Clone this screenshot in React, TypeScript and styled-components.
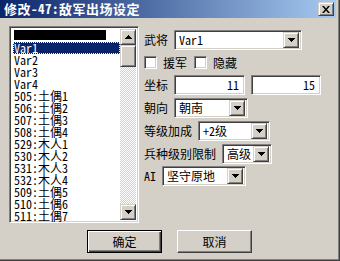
import styled, { createGlobalStyle } from 'styled-components';

const face = '#d4d0c8';
const navy = '#0a246a';
const font = `"Noto Sans Mono CJK SC", "Noto Sans CJK SC", "Liberation Mono", monospace`;

const Global = createGlobalStyle`
  html, body { margin: 0; padding: 0; background: ${face}; }
  body { font: 12px/12px ${font}; color: #000; }
`;

const items = [
  '', 'Var1', 'Var2', 'Var3', 'Var4',
  '505:土偶1', '506:土偶2', '507:土偶3', '508:土偶4',
  '529:木人1', '530:木人2', '531:木人3', '532:木人4',
  '509:土偶5', '510:土偶6', '511:土偶7',
];

const Window = styled.div`
  width: 340px;
  height: 261px;
  box-sizing: border-box;
  padding-right: 4px;
  background: ${face};
  box-shadow: inset -1px -1px #404040, inset -2px -2px #808080;
  display: flex;
  flex-direction: column;
`;

const TitleBar = styled.div`
  height: 18px;
  display: flex;
  align-items: center;
  justify-content: space-between;
  background: linear-gradient(90deg, ${navy}, #a6caf0);
`;

const Title = styled.span`
  color: #fff;
  font-size: 13px;
  font-weight: bold;
  padding-left: 4px;
  letter-spacing: 0.5px;
`;

const Raised = styled.div`
  box-sizing: border-box;
  background: ${face};
  border: 1px solid;
  border-color: ${face} #404040 #404040 ${face};
  box-shadow: inset 1px 1px #fff, inset -1px -1px #808080;
  display: flex;
  align-items: center;
  justify-content: center;
`;

const CloseBtn = styled(Raised)`
  width: 16px;
  height: 14px;
  margin-right: 2px;
`;

const Sunken = styled.div`
  box-sizing: border-box;
  background: #fff;
  border: 1px solid;
  border-color: #808080 #fff #fff #808080;
  box-shadow: inset 1px 1px #404040, inset -1px -1px ${face};
`;

const Body = styled.div`
  display: flex;
  padding: 8px 0 0 9px;
`;

const ListBox = styled(Sunken)`
  width: 130px;
  height: 197px;
  padding: 2px;
  display: flex;
`;

const Items = styled.div`
  flex: 1;
  padding-top: 1px;
`;

const Item = styled.div<{ $selected?: boolean }>`
  height: 12px;
  line-height: 12px;
  padding-left: 1px;
  margin-left: 1px;
  white-space: nowrap;
  background: ${(p) => (p.$selected ? navy : 'transparent')};
  color: ${(p) => (p.$selected ? '#fff' : '#000')};
  outline: ${(p) => (p.$selected ? '1px dotted #fff8c0' : 'none')};
  outline-offset: -1px;
`;

const BlackBar = styled.div`
  width: 92px;
  height: 10px;
  background: #000;
`;

const ScrollBar = styled.div`
  width: 16px;
  display: flex;
  flex-direction: column;
`;

const ArrowBtn = styled(Raised)`
  width: 16px;
  height: 16px;
`;

const Thumb = styled(Raised)`
  width: 16px;
  height: 22px;
`;

const Track = styled.div`
  flex: 1;
  background: repeating-conic-gradient(#fff 0 25%, ${face} 0 50%) 0 0 / 2px 2px;
`;

const Form = styled.div`
  display: flex;
  flex-direction: column;
  padding: 4px 0 0 5px;
`;

const Row = styled.div<{ $top: number; $h?: number }>`
  display: flex;
  align-items: center;
  gap: 6px;
  margin-top: ${(p) => p.$top}px;
  height: ${(p) => p.$h ?? 20}px;
`;

const Label = styled.span`
  white-space: nowrap;
`;

const Combo = styled(Sunken)<{ $w: number }>`
  width: ${(p) => p.$w}px;
  height: 20px;
  padding: 2px;
  display: flex;
  align-items: center;
`;

const ComboText = styled.span`
  flex: 1;
  padding-left: 2px;
  white-space: nowrap;
`;

const DropBtn = styled(Raised)`
  width: 16px;
  height: 16px;
`;

const Edit = styled(Sunken)<{ $w: number }>`
  width: ${(p) => p.$w}px;
  height: 20px;
  padding: 0 5px;
  display: flex;
  align-items: center;
  justify-content: flex-end;
`;

const CheckBox = styled(Sunken)`
  width: 13px;
  height: 13px;
`;

const CheckLabel = styled.span<{ $gap: number }>`
  margin-right: ${(p) => p.$gap}px;
`;

const Buttons = styled.div`
  display: flex;
  gap: 15px;
  padding: 7px 0 0 87px;
`;

const Button = styled.div<{ $default?: boolean }>`
  box-sizing: border-box;
  width: 75px;
  height: 23px;
  display: flex;
  align-items: center;
  justify-content: center;
  background: ${face};
  border: 1px solid;
  border-color: ${(p) => (p.$default ? '#000' : '#fff #404040 #404040 #fff')};
  box-shadow: ${(p) =>
    p.$default
      ? 'inset 1px 1px #fff, inset -1px -1px #404040, inset -2px -2px #808080'
      : 'inset -1px -1px #808080'};
`;

const Arrow = ({ up }: { up?: boolean }) => (
  <svg width="7" height="4" viewBox="0 0 7 4">
    <path d={up ? 'M3 0h1v1h1v1h1v1h1v1H0V3h1V2h1V1h1z' : 'M0 0h7v1H6v1H5v1H4v1H3V3H2V2H1V1H0z'} fill="#000" />
  </svg>
);

const Dropdown = ({ w, text }: { w: number; text: string }) => (
  <Combo $w={w}>
    <ComboText>{text}</ComboText>
    <DropBtn>
      <Arrow />
    </DropBtn>
  </Combo>
);

export default function App() {
  return (
    <>
      <Global />
      <Window>
        <TitleBar>
          <Title>修改-47:敌军出场设定</Title>
          <CloseBtn>
            <svg width="8" height="7" viewBox="0 0 8 7">
              <path d="M0 0h2l2 2.5L6 0h2L5 3.5 8 7H6L4 4.5 2 7H0l3-3.5z" fill="#000" />
            </svg>
          </CloseBtn>
        </TitleBar>
        <Body>
          <ListBox>
            <Items>
              {items.map((t, i) =>
                i === 0 ? (
                  <Item key={i}>
                    <BlackBar />
                  </Item>
                ) : (
                  <Item key={i} $selected={t === 'Var1'}>
                    {t}
                  </Item>
                ),
              )}
            </Items>
            <ScrollBar>
              <ArrowBtn>
                <Arrow up />
              </ArrowBtn>
              <Thumb />
              <Track />
              <ArrowBtn>
                <Arrow />
              </ArrowBtn>
            </ScrollBar>
          </ListBox>
          <Form>
            <Row $top={0}>
              <Label>武将</Label>
              <Dropdown w={128} text="Var1" />
            </Row>
            <Row $top={6} $h={13}>
              <CheckBox />
              <CheckLabel $gap={1}>援军</CheckLabel>
              <CheckBox />
              <CheckLabel $gap={0}>隐藏</CheckLabel>
            </Row>
            <Row $top={6}>
              <Label>坐标</Label>
              <Edit $w={71}>11</Edit>
              <Edit $w={70}>15</Edit>
            </Row>
            <Row $top={3}>
              <Label>朝向</Label>
              <Dropdown w={74} text="朝南" />
            </Row>
            <Row $top={3}>
              <Label>等级加成</Label>
              <Dropdown w={72} text="+2级" />
            </Row>
            <Row $top={3}>
              <Label>兵种级别限制</Label>
              <Dropdown w={50} text="高级" />
            </Row>
            <Row $top={2}>
              <Label>AI</Label>
              <Dropdown w={84} text="坚守原地" />
            </Row>
          </Form>
        </Body>
        <Buttons>
          <Button $default>确定</Button>
          <Button>取消</Button>
        </Buttons>
      </Window>
    </>
  );
}
